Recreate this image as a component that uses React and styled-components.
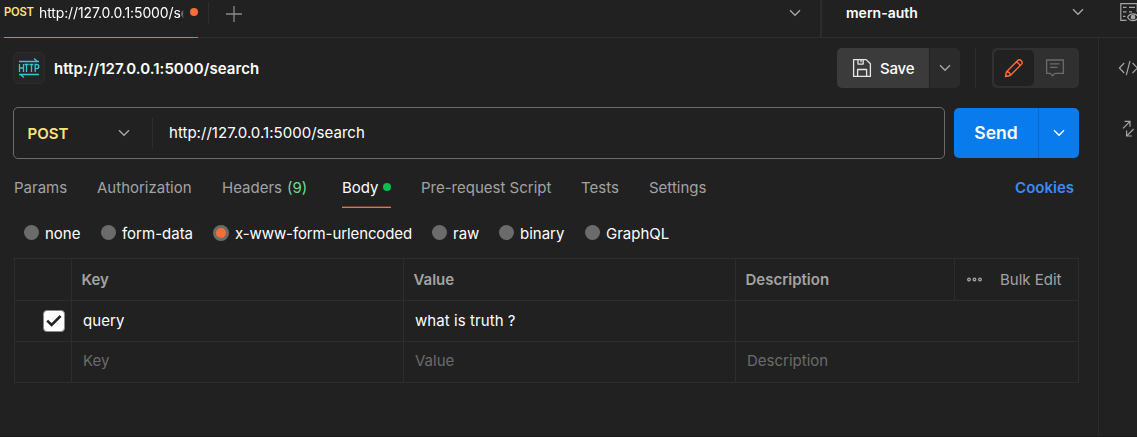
import React from "react";
import styled, { createGlobalStyle } from "styled-components";

const c = {
  bg: "#212121",
  line: "#2d2d2d",
  muted: "#a3a3a3",
  faint: "#6b6b6b",
  orange: "#ff6c37",
  yellow: "#ffe47e",
  green: "#0cbb52",
  blue: "#097bed",
};

const GlobalStyle = createGlobalStyle`
  * { box-sizing: border-box; }
  body {
    margin: 0;
    background: ${c.bg};
    color: #fff;
    font-family: Inter, "Liberation Sans", sans-serif;
    font-size: 15px;
    overflow: hidden;
  }
  svg { display: block; flex: none; }
  button { font: inherit; color: inherit; background: none; border: 0; padding: 0; }
`;

const Window = styled.div`
  width: 1137px;
  height: 437px;
  display: flex;
  flex-direction: column;
  overflow: hidden;
  border-bottom: 1px solid #1a1a1a;
`;

const TopBar = styled.header`
  display: flex;
  flex: none;
  height: 38px;
  border-bottom: 1px solid ${c.line};
`;

const TabStrip = styled.div`
  width: 822px;
  display: flex;
  border-right: 2px solid ${c.line};
`;

const RequestTab = styled.div`
  width: 194px;
  margin: 0 10px -1px 4px;
  height: 38px;
  padding-bottom: 13px;
  display: flex;
  align-items: center;
  border-bottom: 1px solid ${c.orange};
`;

const TabMethod = styled.span`
  width: 35px;
  font-size: 11.25px;
  font-weight: 600;
  letter-spacing: -0.2px;
  color: ${c.yellow};
`;

const TabTitle = styled.span`
  width: 145px;
  overflow: hidden;
  white-space: nowrap;
  font-size: 14px;
  letter-spacing: -0.12px;
  mask-image: linear-gradient(to right, #000 97%, transparent);
`;

const Dot = styled.i`
  flex: none;
  width: 8px;
  height: 8px;
  border-radius: 50%;
  margin-left: ${(p) => p.$left || "0"};
  background: ${(p) => p.$color};
`;

const NewTab = styled.button`
  height: 21px;
  margin-top: 2px;
  padding: 2px 0 0 17px;
  border-left: 1px solid ${c.line};
`;

const StripMenu = styled.div`
  margin-left: auto;
  padding: 9px 19px 0 0;
`;

const Environment = styled.div`
  width: 276px;
  padding: 0 14px 13px 24px;
  display: flex;
  align-items: center;
  justify-content: space-between;
  font-size: 14px;
  font-weight: 600;
`;

const QuickLook = styled.div`
  padding: 3px 0 0 22px;
  width: 39px;
  overflow: hidden;
`;

const Body = styled.div`
  flex: 1;
  display: flex;
`;

const Main = styled.main`
  width: 1099px;
  padding: 10px 19px 0 13px;
  border-right: 1px solid ${c.line};
`;

const Rail = styled.aside`
  width: 38px;
  padding: 22px 0 0 19px;
  display: flex;
  flex-direction: column;
  gap: 44px;
  overflow: hidden;
`;

const TitleRow = styled.div`
  height: 40px;
  display: flex;
  align-items: center;
`;

const HttpBadge = styled.div`
  width: 32px;
  height: 32px;
  display: grid;
  place-items: center;
  border: 1px solid #2b2b2b;
  border-radius: 5px;
  background: #252525;
`;

const Title = styled.h1`
  margin: 0 auto 0 9px;
  font-size: 15px;
  font-weight: 600;
  letter-spacing: 0.05px;
`;

const SaveButton = styled.button`
  width: 92px;
  height: 40px;
  padding-left: 15px;
  display: flex;
  align-items: center;
  gap: 8px;
  font-weight: 500;
  letter-spacing: -0.2px;
  background: #3b3b3b;
  border-radius: 5px 0 0 5px;
`;

const SaveMenu = styled.button`
  width: 30px;
  height: 40px;
  margin-left: 1px;
  display: grid;
  place-items: center;
  background: #2b2b2b;
  border-radius: 0 5px 5px 0;
`;

const Separator = styled.span`
  width: 1px;
  height: ${(p) => p.$height};
  margin: ${(p) => p.$margin};
  background: ${c.line};
`;

const ModeSwitch = styled.div`
  width: 87px;
  height: 40px;
  padding: 2px;
  display: flex;
  background: #303030;
  border-radius: 5px;
`;

const Mode = styled.button`
  width: ${(p) => (p.$active ? "40px" : "42px")};
  height: 36px;
  display: grid;
  place-items: center;
  border-radius: 5px;
  background: ${(p) => (p.$active ? c.bg : "transparent")};
`;

const UrlRow = styled.div`
  margin-top: 19px;
  display: flex;
  align-items: center;
  gap: 9px;
`;

const UrlBox = styled.div`
  width: 932px;
  height: 52px;
  padding-left: 13.5px;
  display: flex;
  align-items: center;
  border: 1px solid #6b6b6b;
  border-radius: 5px;
`;

const Method = styled.span`
  width: 90.5px;
  font-weight: 600;
  color: ${c.yellow};
`;

const UrlText = styled.span`
  padding-bottom: 2px;
  letter-spacing: 0.03px;
`;

const SendButton = styled.div`
  width: 125px;
  height: 50px;
  display: flex;
  border-radius: 5px;
  background: ${c.blue};
  overflow: hidden;
`;

const SendLabel = styled.button`
  width: 84px;
  padding-bottom: 1px;
  font-size: 17.5px;
  font-weight: 600;
`;

const SendMenu = styled.button`
  flex: 1;
  display: grid;
  place-items: center;
  border-left: 1px solid #0968c9;
`;

const Tabs = styled.nav`
  height: 49px;
  padding: 9px 5px 0 1px;
  display: flex;
  align-items: flex-start;
  gap: 30px;
  white-space: nowrap;
`;

const Tab = styled.a`
  width: ${(p) => p.$w}px;
  height: 40px;
  padding-bottom: 1px;
  display: flex;
  align-items: center;
  color: ${(p) => (p.$active ? "#fff" : c.muted)};
  border-bottom: 1px solid ${(p) => (p.$active ? c.orange : "transparent")};
  box-shadow: ${(p) => (p.$active ? "inset 0 -1px 0 rgba(255, 108, 55, 0.35)" : "none")};
`;

const Count = styled.span`
  margin-left: 5px;
  color: #6bdd9a;
`;

const Cookies = styled.a`
  margin-left: auto;
  line-height: 40px;
  font-weight: 600;
  color: #3d8bf2;
`;

const BodyTypes = styled.div`
  height: 50px;
  padding-left: 11px;
  display: flex;
  align-items: center;
  white-space: nowrap;
`;

const BodyType = styled.label`
  width: ${(p) => p.$w}px;
  display: flex;
  align-items: center;
  gap: 6px;
  letter-spacing: ${(p) => p.$track || 0}px;
`;

const Radio = styled.span`
  flex: none;
  width: ${(p) => (p.$on ? 16 : 15)}px;
  height: ${(p) => (p.$on ? 16 : 15)}px;
  margin-top: ${(p) => (p.$on ? -1 : -2)}px;
  border-radius: 50%;
  background: ${(p) => (p.$on ? c.orange : "#6b6b6b")};
  border: ${(p) => (p.$on ? "3px" : "0")} solid #6b6b6b;
`;

const Table = styled.div`
  width: 1065px;
  margin-left: 1px;
  border: 1px solid ${c.line};
`;

const Row = styled.div`
  height: ${(p) => p.$h}px;
  display: grid;
  grid-template-columns: 57px 332px 332px 1fr;
  & + & { border-top: 1px solid ${c.line}; }
`;

const Cell = styled.div`
  display: flex;
  align-items: center;
  padding: 0 0 ${(p) => (p.$head ? 0 : p.$faint ? 3 : 2)}px ${(p) => (p.$head ? 9.5 : 11)}px;
  border-right: ${(p) => (p.$last ? "0" : `1px solid ${c.line}`)};
  font-weight: ${(p) => (p.$head ? 600 : 400)};
  letter-spacing: ${(p) => (p.$head || p.$faint ? 0 : 0.07)}px;
  color: ${(p) => (p.$head ? c.muted : p.$faint ? c.faint : "#fff")};
`;

const CheckCell = styled(Cell)`
  padding: 0 6px 0 0;
  justify-content: flex-end;
`;

const Checkbox = styled.span`
  width: 22px;
  height: 22px;
  display: grid;
  place-items: center;
  background: #fff;
  border: 1px solid #8a8a8a;
  border-radius: 4px;
`;

const BulkTools = styled.div`
  width: 124px;
  height: 100%;
  margin-left: auto;
  padding-left: 12px;
  display: flex;
  align-items: center;
  gap: 18px;
  font-weight: 400;
  border-left: 1px solid ${c.line};
`;

const Chevron = ({ color = "#a6a6a6" }) => (
  <svg width="12" height="8" viewBox="0 0 12 8" fill="none" stroke={color} strokeWidth="1.4">
    <path d="M1 1.2 6 6.2 11 1.2" />
  </svg>
);

const HttpIcon = () => (
  <svg width="22" height="22" viewBox="0 0 22 22" fill="none" stroke="#37c6d4" strokeWidth="1.3">
    <path d="M1 4.5H21M16 1.5L19.6 4.4M21 17.5H1M6 20.5L2.4 17.6" />
    <path d="M1.5 7V15M5.5 7V15M1.5 11H5.5M6.6 7.5H10.6M8.5 7.5V15M11.4 7.5H15.4M13.5 7.5V15M17.2 15V7.5H18.7A2 2 0 0 1 18.7 11.7H17.2" />
  </svg>
);

const SaveIcon = () => (
  <svg width="20" height="20" viewBox="0 0 20 20" fill="none" stroke="#e6e6e6" strokeWidth="1.3" strokeLinejoin="round">
    <path d="M1.6 1.6H14.2L18.4 5.8V18.4H1.6ZM6 1.8V6.1H11.2V1.8M9 2V4.2M5.6 18.2V11.5H14.6V18.2" />
  </svg>
);

const PencilIcon = () => (
  <svg width="20" height="20" viewBox="0 0 20 20" fill="none" stroke={c.orange} strokeWidth="1.4" strokeLinejoin="round">
    <path d="M1.5 18.5 2.5 13.7 13.7 2.5A2.7 2.7 0 0 1 17.5 6.3L6.3 17.5ZM2.5 13.7C4.7 13.7 6.3 15.3 6.3 17.5M12.2 4C13.4 4 16 6.6 16 7.8" />
  </svg>
);

const CommentIcon = () => (
  <svg width="20" height="20" viewBox="0 0 20 20" fill="none" stroke="#6b6b6b" strokeWidth="1.3" strokeLinejoin="round">
    <path d="M1.6 2H18.4V15.4H9.9L7.6 17.7 5.3 15.4H1.6ZM5 5.9H14.6M5 9.3H12.6" />
  </svg>
);

const PlusIcon = () => (
  <svg width="16" height="16" viewBox="0 0 16 16" stroke="#8a8a8a" strokeWidth="1.3">
    <path d="M8 0V16M0 8H16" />
  </svg>
);

const EyeTableIcon = () => (
  <svg width="22" height="20" viewBox="0 0 22 20" fill="none" stroke="#a6a6a6" strokeWidth="1.2">
    <path d="M6.5 17.4H.8V.7H17.2V9M3 4.4H6.5M3 8.9H6.5M3 13.4H5.5M9 4.4H15M9 8.9H12" />
    <path d="M7.6 14.2C9.8 9.7 16.2 9.7 18.4 14.2 16.2 18.7 9.8 18.7 7.6 14.2Z" />
    <circle cx="13" cy="14.2" r="1.8" fill="#a6a6a6" />
  </svg>
);

const CodeIcon = () => (
  <svg width="22" height="16" viewBox="0 0 22 16" fill="none" stroke="#a6a6a6" strokeWidth="1.2">
    <path d="M6.2 3 1.4 8 6.2 13M12 .8 8.3 15.2M14.5 3 19.5 8 14.5 13" />
  </svg>
);

const ExpandIcon = () => (
  <svg width="20" height="18" viewBox="0 0 20 18" fill="none" stroke="#a6a6a6" strokeWidth="1.2">
    <path d="M5 8.4 11.8 1.6M6.6 1.4H12V6.8M15.6 9 8.8 15.8M8.6 10.6V16H14" />
  </svg>
);

const CheckIcon = () => (
  <svg width="16" height="12" viewBox="0 0 16 12" fill="none" stroke="#212121" strokeWidth="2.5">
    <path d="M1.2 5.6 5.6 10 14.6 1" />
  </svg>
);

const MoreIcon = () => (
  <svg width="15" height="5" viewBox="0 0 15 5" fill="none" stroke="#a6a6a6" strokeWidth="1.3">
    <circle cx="2" cy="2.5" r="1.3" />
    <circle cx="7.5" cy="2.5" r="1.3" />
    <circle cx="13" cy="2.5" r="1.3" />
  </svg>
);

const bodyTypes = [
  ["none", 77],
  ["form-data", 112],
  ["x-www-form-urlencoded", 219, -0.1],
  ["raw", 67],
  ["binary", 86],
  ["GraphQL", 90],
];

export default function App() {
  return (
    <Window>
      <GlobalStyle />
      <TopBar>
        <TabStrip>
          <RequestTab>
            <TabMethod>POST</TabMethod>
            <TabTitle>http://127.0.0.1:5000/search</TabTitle>
            <Dot $color={c.orange} $left="6px" />
          </RequestTab>
          <NewTab><PlusIcon /></NewTab>
          <StripMenu><Chevron /></StripMenu>
        </TabStrip>
        <Environment>mern-auth<Chevron /></Environment>
        <QuickLook><EyeTableIcon /></QuickLook>
      </TopBar>
      <Body>
        <Main>
          <TitleRow>
            <HttpBadge><HttpIcon /></HttpBadge>
            <Title>http://127.0.0.1:5000/search</Title>
            <SaveButton><SaveIcon />Save</SaveButton>
            <SaveMenu><Chevron /></SaveMenu>
            <Separator $height="40px" $margin="0 16px 0 15px" />
            <ModeSwitch>
              <Mode $active><PencilIcon /></Mode>
              <Mode><CommentIcon /></Mode>
            </ModeSwitch>
          </TitleRow>
          <UrlRow>
            <UrlBox>
              <Method>POST</Method>
              <Chevron />
              <Separator $height="30px" $margin="0 16px 0 22px" />
              <UrlText>http://127.0.0.1:5000/search</UrlText>
            </UrlBox>
            <SendButton>
              <SendLabel>Send</SendLabel>
              <SendMenu><Chevron color="#fff" /></SendMenu>
            </SendButton>
          </UrlRow>
          <Tabs>
            <Tab $w={53}>Params</Tab>
            <Tab $w={95}>Authorization</Tab>
            <Tab $w={90}>Headers <Count>(9)</Count></Tab>
            <Tab $w={49} $active>Body<Dot $color={c.green} $left="4px" /></Tab>
            <Tab $w={130}>Pre-request Script</Tab>
            <Tab $w={38}>Tests</Tab>
            <Tab $w={59}>Settings</Tab>
            <Cookies>Cookies</Cookies>
          </Tabs>
          <BodyTypes>
            {bodyTypes.map(([name, w, track]) => (
              <BodyType key={name} $w={w} $track={track}>
                <Radio $on={name === "x-www-form-urlencoded"} />
                {name}
              </BodyType>
            ))}
          </BodyTypes>
          <Table>
            <Row $h={41}>
              <Cell $head />
              <Cell $head>Key</Cell>
              <Cell $head>Value</Cell>
              <Cell $head $last>
                Description
                <BulkTools><MoreIcon />Bulk Edit</BulkTools>
              </Cell>
            </Row>
            <Row $h={41}>
              <CheckCell><Checkbox><CheckIcon /></Checkbox></CheckCell>
              <Cell>query</Cell>
              <Cell>what is truth ?</Cell>
              <Cell $last />
            </Row>
            <Row $h={41}>
              <Cell />
              <Cell $faint>Key</Cell>
              <Cell $faint>Value</Cell>
              <Cell $faint $last>Description</Cell>
            </Row>
          </Table>
        </Main>
        <Rail><CodeIcon /><ExpandIcon /></Rail>
      </Body>
    </Window>
  );
}
